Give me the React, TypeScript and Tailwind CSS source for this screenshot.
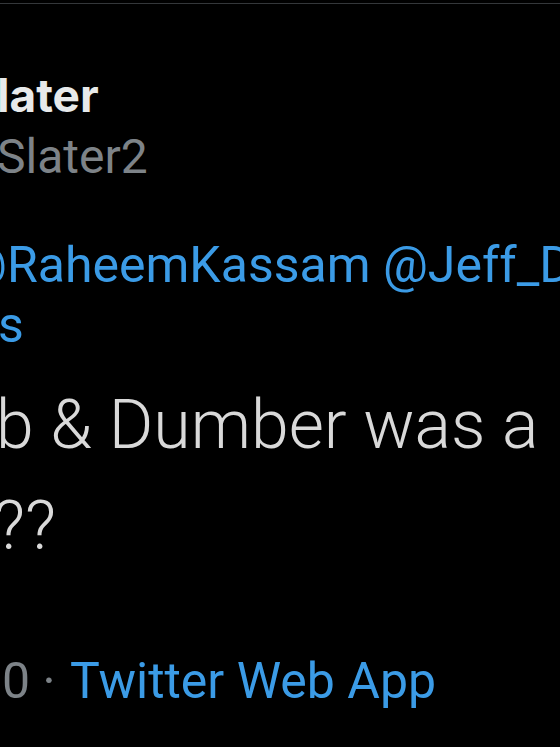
export default function App() {
  return (
    <div className="h-[747px] w-[560px] overflow-hidden bg-black font-['Roboto',sans-serif]">
      <div className="mt-[3px] h-px bg-[#34373a]" />

      <div className="mt-[68px] -ml-[3px] whitespace-nowrap font-['Inter',sans-serif] text-[46px] font-bold leading-none text-[#e7e9ea]">
        later
      </div>
      <div className="mt-[15px] -ml-[3px] whitespace-nowrap text-[48px] leading-none text-[#7d8388]">
        Slater2
      </div>

      <div className="mt-[59px] -ml-[38px] whitespace-nowrap text-[50px] leading-none text-[#3b9be6]">
        @RaheemKassam @Jeff_Dorgan
      </div>
      <div className="mt-[10px] -ml-[2px] whitespace-nowrap text-[50px] leading-none text-[#3b9be6]">
        s
      </div>

      <div className="mt-[41px] -ml-[4px] whitespace-nowrap text-[68px] font-light leading-none text-[#d9d9d9]">
        b &amp; Dumber was a
      </div>
      <div className="mt-[33px] -ml-[6px] whitespace-nowrap text-[68px] font-light leading-none text-[#d9d9d9]">
        ??
      </div>

      <div className="mt-[96px] ml-[2px] whitespace-nowrap text-[50px] leading-none">
        <span className="text-[#7d8388]">0 · </span>
        <span className="ml-[2px] text-[#3b9be6]">Twitter Web App</span>
      </div>
    </div>
  );
}
